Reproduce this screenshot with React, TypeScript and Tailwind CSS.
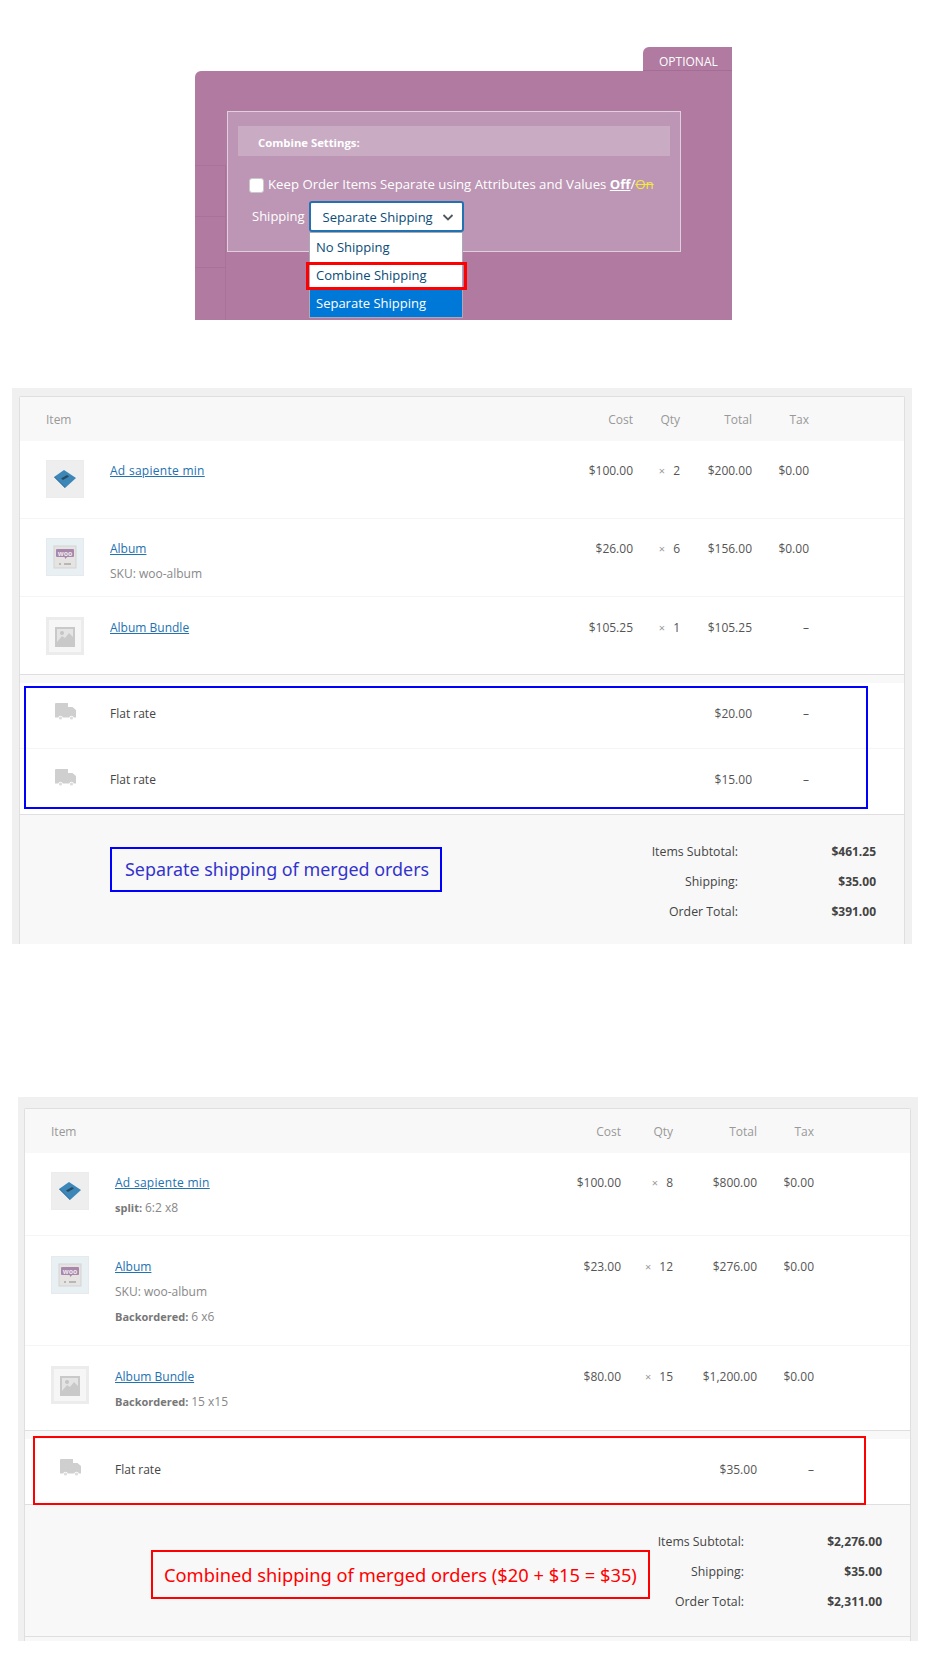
import React from "react";

const font = { fontFamily: '"Open Sans", "Noto Sans", sans-serif' };

function Truck() {
  return (
    <svg width="21" height="17" viewBox="0 0 21 17" className="block">
      <path d="M0 1a1 1 0 0 1 1-1h12v4h4.5l3.5 3v7.5h-2.2a2.4 2.4 0 0 0-4.6 0H7.8a2.4 2.4 0 0 0-4.6 0H0z" fill="#cfcfcf" />
      <circle cx="5.5" cy="15" r="1.6" fill="#dcdcdc" />
      <circle cx="16.5" cy="15" r="1.6" fill="#dcdcdc" />
    </svg>
  );
}

function Thumb({ kind }: { kind: "book" | "woo" | "ph" }) {
  if (kind === "book")
    return (
      <div className="w-[38px] h-[38px] bg-[#eeeeee] border border-[#ececec] flex items-center justify-center shrink-0">
        <svg width="24" height="20" viewBox="0 0 24 20">
          <path d="M1 8 L11 1 L23 9 L12 19 Z" fill="#3d86b8" />
          <path d="M1 8 L12 19 L12 18 L2 8 Z" fill="#2f6f9c" />
          <path d="M8 9.5 L14 6 L16 7.5 L10 11 Z" fill="#2a4a63" />
        </svg>
      </div>
    );
  if (kind === "woo")
    return (
      <div className="w-[38px] h-[38px] bg-[#e8f0f3] border border-[#e6eaec] flex items-center justify-center shrink-0">
        <svg width="24" height="24" viewBox="0 0 24 24">
          <rect x="1" y="1" width="22" height="22" fill="#e6e4e2" stroke="#d5d3d1" />
          <path d="M4 4h16a1 1 0 0 1 1 1v6a1 1 0 0 1-1 1h-6l-1.5 2-1-2H4a1 1 0 0 1-1-1V5a1 1 0 0 1 1-1z" fill="#a787ab" />
          <text x="12" y="10.5" textAnchor="middle" fontSize="7" fontWeight="700" fill="#eee6ee" style={font}>woo</text>
          <path d="M6 19h2M11 19h7" stroke="#8a8a8a" strokeWidth="1" />
        </svg>
      </div>
    );
  return (
    <div className="w-[38px] h-[38px] bg-[#f6f6f6] border-[3px] border-[#ececec] flex items-center justify-center shrink-0">
      <svg width="20" height="20" viewBox="0 0 20 20" className="mt-[1px]">
        <rect x="1" y="1" width="18" height="18" fill="#e4e4e4" stroke="#c9c9c9" strokeWidth="2" />
        <circle cx="7" cy="6" r="2" fill="#c4c4c4" />
        <path d="M2 15 L7 9 L10 11 L14 6 L18 10 V18 H2 Z" fill="#c9c9c9" />
      </svg>
    </div>
  );
}

type Row = {
  kind: "book" | "woo" | "ph";
  name: string;
  nameCls?: string;
  meta?: React.ReactNode[];
  cost: string;
  qty: string;
  total: string;
  tax: string;
  rowCls: string;
};

function Meta({ label, value }: { label?: string; value: string }) {
  return (
    <div className="mt-[5px] leading-[20px] text-[12px] text-[#888888]">
      {label && <b className="text-[#777777] font-bold text-[11px]">{label} </b>}
      {value}
    </div>
  );
}

function OrderTable({
  outerCls,
  grid,
  rows,
  ships,
  overlay,
  note,
  totals,
  totalsCls,
  footer,
}: {
  outerCls: string;
  grid: string;
  rows: Row[];
  ships: { amount: string; cls: string }[];
  overlay: string;
  note: React.ReactNode;
  totals: string[];
  totalsCls: string;
  footer?: boolean;
}) {
  return (
    <div className={`bg-[#f0f0f0] w-[900px] ${outerCls}`}>
      <div className="border-x border-t border-[#dfdfdf] bg-white rounded-t-[2px] text-[12px] text-[#555555]">
        <div className={`grid ${grid} h-[44px] items-center pt-[2px] bg-[#f8f8f8] text-[#999999]`}>
          <div className="pl-[26px]">Item</div>
          <div className="text-right">Cost</div>
          <div className="text-right">Qty</div>
          <div className="text-right">Total</div>
          <div className="text-right">Tax</div>
          <div />
        </div>
        {rows.map((r) => (
          <div key={r.name} className={`grid ${grid} ${r.rowCls}`}>
            <div className="pl-[26px] flex gap-[26px]">
              <Thumb kind={r.kind} />
              <div className="pt-[1px]">
                <a className={`block leading-[20px] text-[#2271b1] underline w-fit ${r.nameCls ?? ""}`}>{r.name}</a>
                {r.meta}
              </div>
            </div>
            <div className="text-right leading-[20px] pt-[1px]">{r.cost}</div>
            <div className="text-right leading-[20px] pt-[1px]">
              <span className="text-[#999999] text-[11px] mr-[8px]">×</span>
              {r.qty}
            </div>
            <div className="text-right leading-[20px] pt-[1px]">{r.total}</div>
            <div className="text-right leading-[20px] pt-[1px]">{r.tax}</div>
            <div />
          </div>
        ))}
        <div className="relative border-t border-b border-[#dfdfdf]">
          <div className="h-[8px] bg-[#f8f8f8]" />
          {ships.map((s, i) => (
            <div key={i} className={`grid ${grid} ${s.cls}`}>
              <div className="pl-[35px] flex">
                <div className="w-[29px] mr-[26px] shrink-0">
                  <Truck />
                </div>
                <div className="leading-[20px] pt-[1px] text-[#444444]">Flat rate</div>
              </div>
              <div />
              <div />
              <div className="text-right leading-[20px] pt-[1px]">{s.amount}</div>
              <div className="text-right leading-[20px] pt-[1px]">–</div>
              <div />
            </div>
          ))}
          <div className={`absolute border-2 ${overlay}`} />
        </div>
        <div className={`bg-[#f8f8f8] flex justify-between ${totalsCls}`}>
          {note}
          <div className="pt-[27px] pr-[28px]">
            {[
              ["Items Subtotal:", totals[0]],
              ["Shipping:", totals[1]],
              ["Order Total:", totals[2]],
            ].map(([l, v]) => (
              <div key={l} className="flex justify-end h-[30px] leading-[20px] text-[#444444]">
                <div className="text-right text-[12.3px]">{l}</div>
                <div className="w-[138px] text-right font-bold">{v}</div>
              </div>
            ))}
          </div>
        </div>
        {footer && <div className="h-[4px] bg-[#f8f8f8]" />}
      </div>
    </div>
  );
}

export default function App() {
  return (
    <div className="w-[936px] h-[1660px] bg-white overflow-hidden" style={font}>
      <div className="pt-[47px] ml-[195px] w-[537px]">
        <div className="flex justify-end">
          <div className="w-[89px] h-[24px] bg-[#b07aa1] rounded-tl-[6px] text-white text-[12px] leading-[30px] pl-[16px] border-b border-[#a56d96]">
            OPTIONAL
          </div>
        </div>
        <div className="relative h-[249px] bg-[#b07aa1] rounded-tl-[6px] pt-[40px] pl-[32px]">
          <div className="absolute left-0 top-[94px] w-[31px] bottom-0 border-r border-[#a8729a]">
            <div className="h-[51px] border-t border-[#a8729a]" />
            <div className="h-[51px] border-t border-[#a8729a]" />
            <div className="h-[51px] border-t border-[#a8729a]" />
          </div>
          <div className="relative w-[454px] h-[141px] bg-[#bc96b4] border border-[#e0cfdc] pt-[14px] px-[10px]">
            <div className="h-[30px] bg-[#c9abc3] pl-[20px] leading-[33px] text-[11.3px] font-bold text-white">Combine Settings:</div>
            <div className="flex items-center mt-[21px] ml-[11px] h-[16px] text-[13.2px] text-white">
              <span className="w-[15px] h-[15px] bg-white border border-[#c9c9c9] rounded-[3px] mr-[4px] shrink-0" />
              <span className="whitespace-nowrap">
                Keep Order Items Separate using Attributes and Values{" "}
                <b className="underline font-bold">Off</b>/<span className="line-through text-[#f5e642]">On</span>
              </span>
            </div>
            <div className="flex items-center mt-[8px] ml-[14px] h-[31px]">
              <span className="text-[13px] text-white mr-[4px]">Shipping</span>
              <div className="w-[155px] h-[31px] bg-white border-2 border-[#2271b1] rounded-[3px] flex items-center justify-between pl-[12px] pr-[7px] text-[13px] text-[#0a4b78]">
                <span className="pt-[3px]">Separate Shipping</span>
                <svg width="14" height="14" viewBox="0 0 14 14">
                  <path d="M2.5 5 L7 9.5 L11.5 5" fill="none" stroke="#50575e" strokeWidth="1.8" />
                </svg>
              </div>
            </div>
            <div className="absolute left-[81px] top-[120px] w-[154px] bg-white border border-[#a9a9b8] text-[13px] text-[#0a4b78] z-10">
              <div className="h-[28px] leading-[28px] pl-[6px]">No Shipping</div>
              <div className="relative h-[28px] leading-[28px] pl-[6px]">
                Combine Shipping
                <div className="absolute -left-[4px] -right-[5px] top-[1px] h-[28px] border-[3px] border-[#ff0000]" />
              </div>
              <div className="h-[28px] leading-[28px] pl-[6px] bg-[#0078d7] text-white">Separate Shipping</div>
            </div>
          </div>
        </div>
      </div>

      <OrderTable
        outerCls="ml-[12px] mt-[68px] pt-[8px] px-[7px]"
        grid="grid-cols-[1fr_83px_47px_72px_57px_95px]"
        rows={[
          { kind: "book", name: "Ad sapiente min", nameCls: "tracking-[0.28px]", cost: "$100.00", qty: "2", total: "$200.00", tax: "$0.00", rowCls: "h-[78px] pt-[19px] border-b border-[#f5f5f5]" },
          { kind: "woo", name: "Album", meta: [<Meta key="s" value="SKU: woo-album" />], cost: "$26.00", qty: "6", total: "$156.00", tax: "$0.00", rowCls: "h-[78px] pt-[19px] border-b border-[#f5f5f5]" },
          { kind: "ph", name: "Album Bundle", cost: "$105.25", qty: "1", total: "$105.25", tax: "–", rowCls: "h-[77px] pt-[20px]" },
        ]}
        ships={[
          { amount: "$20.00", cls: "h-[66px] pt-[20px] border-b border-[#f5f5f5]" },
          { amount: "$15.00", cls: "h-[65px] pt-[20px]" },
        ]}
        overlay="left-[4px] top-[11px] w-[844px] h-[123px] border-[#0000ff]"
        totalsCls="h-[129px]"
        note={
          <div className="ml-[90px] mt-[32px] w-[332px] h-[45px] border-2 border-[#0000ff] flex items-center pl-[13px] text-[17.9px] text-[#3333cc] whitespace-nowrap" style={{ fontFamily: '"Noto Sans", sans-serif' }}>
            Separate shipping of merged orders
          </div>
        }
        totals={["$461.25", "$35.00", "$391.00"]}
      />

      <OrderTable
        outerCls="ml-[18px] mt-[153px] pt-[11px] pl-[6px] pr-[7px]"
        grid="grid-cols-[1fr_83px_52px_84px_57px_96px]"
        rows={[
          { kind: "book", name: "Ad sapiente min", nameCls: "tracking-[0.28px]", meta: [<Meta key="s" label="split:" value="6:2 x8" />], cost: "$100.00", qty: "8", total: "$800.00", tax: "$0.00", rowCls: "h-[83px] pt-[19px] border-b border-[#f5f5f5]" },
          { kind: "woo", name: "Album", meta: [<Meta key="s" value="SKU: woo-album" />, <Meta key="b" label="Backordered:" value="6 x6" />], cost: "$23.00", qty: "12", total: "$276.00", tax: "$0.00", rowCls: "h-[110px] pt-[20px] border-b border-[#f5f5f5]" },
          { kind: "ph", name: "Album Bundle", meta: [<Meta key="b" label="Backordered:" value="15 x15" />], cost: "$80.00", qty: "15", total: "$1,200.00", tax: "$0.00", rowCls: "h-[84px] pt-[20px]" },
        ]}
        ships={[{ amount: "$35.00", cls: "h-[65px] pt-[20px]" }]}
        overlay="left-[8px] top-[5px] w-[833px] h-[69px] border-[#ff0000]"
        totalsCls="h-[132px] border-b border-[#dfdfdf]"
        note={
          <div className="ml-[126px] mt-[45px] w-[499px] h-[49px] border-2 border-[#ff0000] flex items-center pl-[11px] text-[18.3px] text-[#ff0000] whitespace-nowrap" style={{ fontFamily: '"Noto Sans", sans-serif' }}>
            Combined shipping of merged orders ($20 + $15 = $35)
          </div>
        }
        totals={["$2,276.00", "$35.00", "$2,311.00"]}
        footer
      />
    </div>
  );
}
